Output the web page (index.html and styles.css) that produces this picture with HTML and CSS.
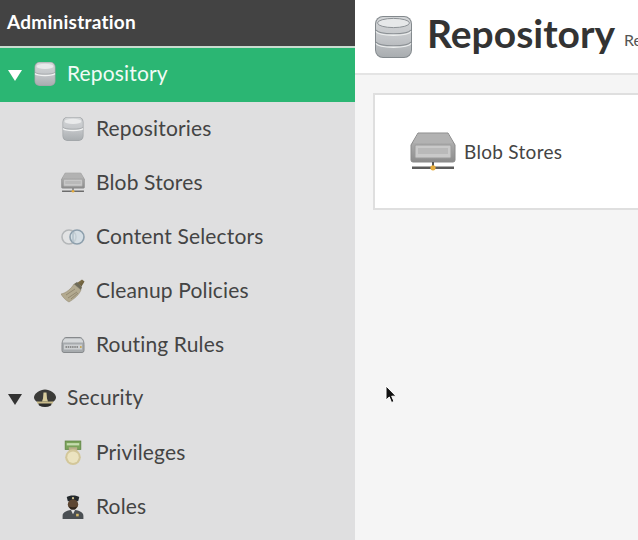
FILE: index.html
```html
<!DOCTYPE html>
<html>
  <head>
    <meta charset="utf-8">
    <title>Repository</title>
    <link rel="stylesheet" href="styles.css">
  </head>
  <body>
    <svg class="defs" width="0" height="0">
      <defs>
        <linearGradient id="grisDisque" x1="0" y1="0" x2="0" y2="1">
          <stop offset="0" stop-color="#d4d6d8"/>
          <stop offset="0.55" stop-color="#c2c5c8"/>
          <stop offset="1" stop-color="#a9adb0"/>
        </linearGradient>
        <linearGradient id="grisBoitier" x1="0" y1="0" x2="0" y2="1">
          <stop offset="0" stop-color="#bcbcbc"/>
          <stop offset="1" stop-color="#8c8c8c"/>
        </linearGradient>
        <linearGradient id="manche" x1="0" y1="0" x2="1" y2="1">
          <stop offset="0" stop-color="#8b7a52"/>
          <stop offset="1" stop-color="#5f5434"/>
        </linearGradient>

        <symbol id="base" viewBox="0 0 24 26">
          <rect x="1.500" y="1" width="21" height="24" rx="5" fill="#9da1a4"/>
          <rect x="2.200" y="1.600" width="19.600" height="22.800" rx="4.400" fill="url(#grisDisque)"/>
          <ellipse cx="12" cy="5.400" rx="8.400" ry="2.700" fill="#e9eaeb"/>
          <path d="M2.200 12.600c2 2.400 17.600 2.400 19.600 0" fill="none" stroke="#f1f2f2" stroke-width="1.600"/>
          <path d="M2.200 11.400c2 2.400 17.600 2.400 19.600 0" fill="none" stroke="#9fa3a6" stroke-width=".8"/>
        </symbol>

        <symbol id="base3" viewBox="0 0 40 46">
          <rect x="1" y="2" width="37" height="42" rx="8" fill="#83898d"/>
          <rect x="2" y="3" width="35" height="40" rx="7" fill="url(#grisDisque)"/>
          <ellipse cx="19.500" cy="9" rx="16" ry="4.600" fill="#e6e8e9" stroke="#8e9397"/>
          <path d="M2 16c3 5 32 5 35 0" fill="none" stroke="#8b9094" stroke-width="1.200"/>
          <path d="M2 17.500c3 5 32 5 35 0" fill="none" stroke="#eceeee" stroke-width="1.400"/>
          <path d="M2 28c3 5 32 5 35 0" fill="none" stroke="#8b9094" stroke-width="1.200"/>
          <path d="M2 29.500c3 5 32 5 35 0" fill="none" stroke="#eceeee" stroke-width="1.400"/>
        </symbol>

        <symbol id="blob" viewBox="0 0 46 40">
          <path d="M8 1h30l7 12v15a2 2 0 0 1-2 2H3a2 2 0 0 1-2-2V13z" fill="url(#grisBoitier)" stroke="#8a8a8a"/>
          <path d="M8 2h30l5 9H3z" fill="#b2b2b2"/>
          <rect x="5" y="13" width="36" height="13" rx="1" fill="#c9c9c9" stroke="#9b9b9b"/>
          <rect x="8" y="16" width="30" height="6" fill="#b9b9b9"/>
          <rect x="22" y="30" width="2" height="5" fill="#555"/>
          <rect x="2" y="34.500" width="42" height="2.500" fill="#5c5c5c"/>
          <circle cx="23" cy="35.800" r="2.600" fill="#e6ac3c"/>
        </symbol>

        <symbol id="selecteurs" viewBox="0 0 24 17">
          <circle cx="8" cy="8.500" r="7" fill="#e2e3e4" stroke="#b4b7b9" stroke-width="1.600"/>
          <circle cx="16" cy="8.500" r="7" fill="#cfdde6" fill-opacity=".6" stroke="#8d9fac" stroke-width="1.600"/>
          <path d="M12 3v11" stroke="#9fb0bc" stroke-width="1"/>
        </symbol>

        <symbol id="balai" viewBox="0 0 24 24">
          <path d="M16 4l5-3.500 2.500 2-3 5z" fill="url(#manche)"/>
          <path d="M13 5l7 6c-2 5-7 9-12 12-2-1-5-3-8-8 5-1 10-5 13-10z" fill="#b3aa90" stroke="#8c8268" stroke-width=".5"/>
          <path d="M5 16l9-6M7 19l9-6M10 20l7-6" stroke="#8a8069" stroke-width=".8"/>
          <path d="M13 5l3-2 5 5-1 3z" fill="#6e6a58"/>
        </symbol>

        <symbol id="routage" viewBox="0 0 24 17">
          <path d="M5 1h14c2 0 4 3 4 7v6a2 2 0 0 1-2 2H3a2 2 0 0 1-2-2V8c0-4 2-7 4-7z" fill="#a7abae" stroke="#86898c"/>
          <path d="M5 2h14c1.500 0 3 2 3.300 4H1.700C2 4 3.500 2 5 2z" fill="#d5d8da"/>
          <rect x="3" y="8" width="18" height="5" fill="#cdd0d2"/>
          <path d="M4.500 10.500h13" stroke="#777" stroke-width="1.600" stroke-dasharray="1.500 .7"/>
          <rect x="19" y="9.500" width="1.600" height="2" fill="#c7a95a"/>
        </symbol>

        <symbol id="casquette" viewBox="0 0 24 19">
          <path d="M1 9c0-4 6-8 11-8s11 4 11 8c0 3-4 5-5 5H6c-1 0-5-2-5-5z" fill="#3b3b38"/>
          <path d="M5 14c4-2 10-2 14 0l-1 3c-4 2-8 2-12 0z" fill="#2c2c2a"/>
          <rect x="4" y="13" width="16" height="2" fill="#c9bb8b"/>
          <path d="M10.500 4h3l.5 6 1 3H9l1-3z" fill="#d8cc9c"/>
        </symbol>

        <symbol id="medaille" viewBox="0 0 18 25">
          <rect x="1.500" y="1" width="15" height="8" fill="#7ba35a" stroke="#5f8443" stroke-width=".8"/>
          <rect x="3" y="3" width="12" height="2.200" fill="#c5dcae"/>
          <rect x="5" y="7" width="8" height="4" fill="#b9b08a"/>
          <circle cx="9" cy="16.500" r="7.500" fill="#d3c79a"/>
          <circle cx="9" cy="16.500" r="5.500" fill="#ebe3c0"/>
        </symbol>

        <symbol id="role" viewBox="0 0 22 25">
          <path d="M5 3c2-2 10-2 12 0l-1 4H6z" fill="#23282c"/>
          <rect x="10" y="3" width="2" height="2" fill="#c9bb8b"/>
          <ellipse cx="11" cy="10" rx="5" ry="5" fill="#5d4632"/>
          <path d="M7 12c2 1 6 1 8 0l-2 3H9z" fill="#2e241b"/>
          <path d="M1 24v-3c0-4 5-5 10-6 5 1 10 2 10 6v3z" fill="#4a4f53"/>
          <path d="M9 15.500h4l-2 4z" fill="#e3e3e3"/>
          <rect x="14" y="19" width="2.500" height="2.500" fill="#d5b867"/>
        </symbol>
      </defs>
    </svg>

    <div class="conteneur">
      <div class="menu">
        <div class="menu-titre">Administration</div>
        <div class="ligne parent active">
          <span class="fleche"></span>
          <svg class="ico"><use href="#base"/></svg>
          <span>Repository</span>
        </div>
        <div class="ligne enfant">
          <svg class="ico"><use href="#base"/></svg>
          <span>Repositories</span>
        </div>
        <div class="ligne enfant">
          <svg class="ico"><use href="#blob"/></svg>
          <span>Blob Stores</span>
        </div>
        <div class="ligne enfant">
          <svg class="ico"><use href="#selecteurs"/></svg>
          <span>Content Selectors</span>
        </div>
        <div class="ligne enfant">
          <svg class="ico"><use href="#balai"/></svg>
          <span>Cleanup Policies</span>
        </div>
        <div class="ligne enfant">
          <svg class="ico"><use href="#routage"/></svg>
          <span>Routing Rules</span>
        </div>
        <div class="ligne parent">
          <span class="fleche"></span>
          <svg class="ico"><use href="#casquette"/></svg>
          <span>Security</span>
        </div>
        <div class="ligne enfant">
          <svg class="ico"><use href="#medaille"/></svg>
          <span>Privileges</span>
        </div>
        <div class="ligne enfant">
          <svg class="ico"><use href="#role"/></svg>
          <span>Roles</span>
        </div>
      </div>

      <div class="contenu">
        <div class="entete">
          <svg class="ico-titre"><use href="#base3"/></svg>
          <h1>Repository</h1>
          <span class="sous-titre">Re</span>
        </div>
        <div class="carte">
          <div class="tuile">
            <svg class="ico-tuile"><use href="#blob"/></svg>
            <span>Blob Stores</span>
          </div>
        </div>
        <svg class="curseur" width="12" height="19" viewBox="0 0 12 19">
          <path d="M1 1v14l3.300-3 2.200 5.500 2.500-1-2.300-5.300H11z" fill="#111" stroke="#fff" stroke-width="1"/>
        </svg>
      </div>
    </div>
  </body>
</html>
```

FILE: styles.css
```css
html, body, div, h1{
  margin:0px;
  padding:0px;
}
body{
  overflow:hidden;
  font-family:"Lato", "Open Sans", sans-serif;
  color:#444;
}
.defs{
  display:block;
  height:0px;
}
.conteneur{
  display:flex;
  width:100%;
  height:100vh;
  overflow:hidden;
}
.menu{
  flex:0 0 355px;
  background-color:#dfdfe0;
}
.menu-titre{
  height:46px;
  padding-left:7px;
  box-sizing:border-box;
  line-height:44px;
  background-color:#434343;
  color:#fff;
  font-size:19px;
  font-weight:700;
  letter-spacing:0.25px;
}
.ligne{
  display:flex;
  align-items:center;
  height:54px;
  box-sizing:border-box;
  font-size:21px;
  letter-spacing:0.15px;
}
.parent{
  padding-left:8px;
  padding-bottom:6px;
}
.parent .ico{
  margin-right:10px;
}
.enfant{
  padding-left:61px;
  padding-bottom:4px;
}
.active{
  margin-top:2px;
  background-color:#2bb673;
  box-shadow:0px -2px 0px #c9dcd0;
  color:#f2fbf6;
}
.fleche{
  width:0px;
  height:0px;
  margin-top:6px;
  margin-right:11px;
  border-left:7px solid transparent;
  border-right:7px solid transparent;
  border-top:11px solid #333;
}
.active .fleche{
  border-top-color:#fff;
}
.ico{
  flex:none;
  width:24px;
  height:26px;
  margin-top:3px;
  margin-right:11px;
}
.contenu{
  position:relative;
  flex:1;
  min-width:0;
  background-color:#f5f5f5;
}
.entete{
  display:flex;
  align-items:center;
  height:73px;
  padding-left:19px;
  background-color:#fff;
  border-bottom:2px solid #e4e4e4;
  white-space:nowrap;
}
.ico-titre{
  flex:none;
  width:40px;
  height:46px;
  margin-right:13px;
}
h1{
  margin-bottom:8px;
  font-size:39px;
  font-weight:700;
  color:#333;
}
.sous-titre{
  margin-left:9px;
  margin-top:6px;
  font-size:16px;
  color:#555;
}
.carte{
  width:400px;
  height:117px;
  margin:18px 0px 0px 18px;
  box-sizing:border-box;
  background-color:#fff;
  border:2px solid #dfdfdf;
}
.tuile{
  display:flex;
  align-items:center;
  height:113px;
  padding-left:35px;
  font-size:19px;
  letter-spacing:0.3px;
}
.ico-tuile{
  flex:none;
  width:46px;
  height:40px;
  margin-right:8px;
}
.curseur{
  position:absolute;
  left:30px;
  top:385px;
}
```
